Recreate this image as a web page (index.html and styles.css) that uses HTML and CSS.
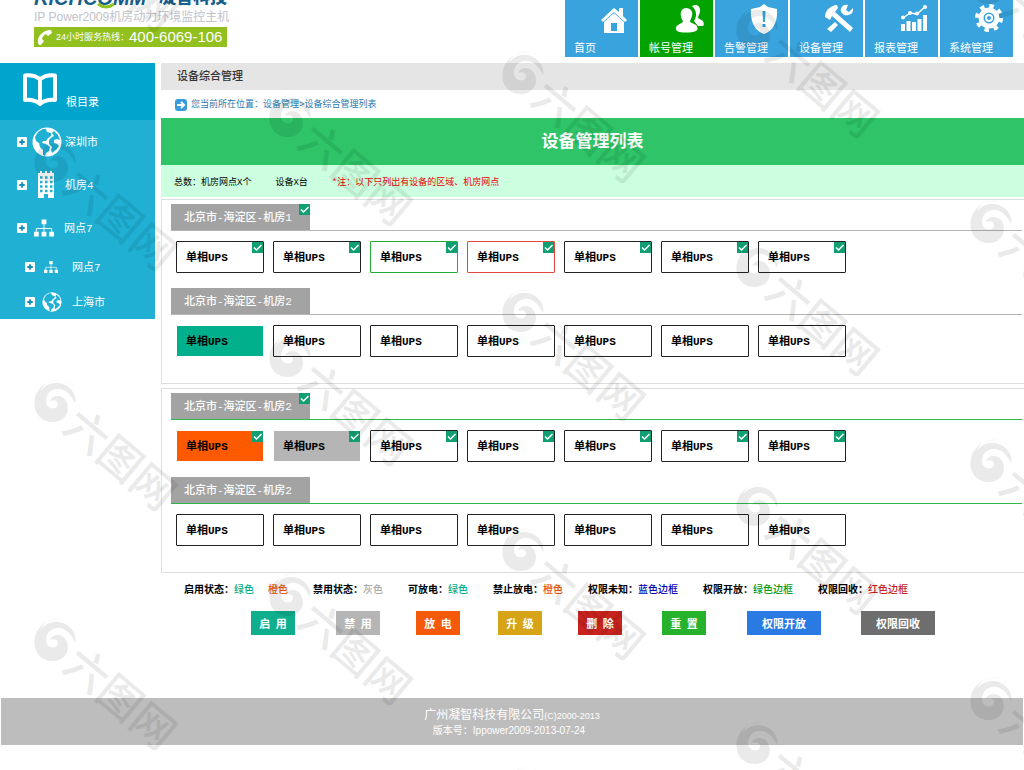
FILE: index.html
```html
<!DOCTYPE html>
<html lang="zh-CN">
<head>
<meta charset="utf-8">
<title>设备综合管理</title>
<link rel="stylesheet" href="styles.css">
</head>
<body>
<svg class="defs" aria-hidden="true">
  <symbol id="globe" viewBox="0 0 30 30">
    <circle cx="15" cy="15" r="14.500" fill="#fff"/>
    <path fill="#20b0d4" d="M3 10l3-5 5-3 3 0 1 3 4 1 0 3-3 2-2 3-3 0-1 2 4 1 4 3-1 4-3 2-1 3-2-1 0-5-3-3-1-4-3-2zM22 4l4 4 2 5-3-1-3 1 0 3 3 1 2 2-3 4-4 3-1-3 1-3-3-3 0-4 3-3 2-1-2-3z"/>
  </symbol>
  <symbol id="tree" viewBox="0 0 21 18">
    <path fill="#fff" d="M8 0h5v5H8zM0 13h5v5H0zM8 13h5v5H8zM16 13h5v5h-5z"/>
    <path fill="none" stroke="#fff" d="M10.500 5v8M2.500 13V9.500h16V13"/>
  </symbol>
  <symbol id="plus" viewBox="0 0 11 11">
    <rect width="11" height="11" rx="1" fill="#fff"/>
    <path d="M5.500 2.500v6M2.500 5.500h6" stroke="#138fb5" stroke-width="2"/>
  </symbol>
</svg>

<header class="header">
  <div class="brand">
    <div class="logo"><i>RICHCOMM</i><b>凝智科技</b>
      <svg class="smile" viewBox="0 0 18 7"><path d="M1 1q8 6 16 0" fill="none" stroke="#8fc31f" stroke-width="3"/></svg>
    </div>
    <div class="product">IP Power2009机房动力环境监控主机</div>
    <div class="hotline">
      <svg viewBox="0 0 16 16"><path fill="#fff" d="M1 14C0 7 6 1 14 1l1 3-4 3-2-2C7 6 5 8 5 10l2 2-3 4-2 0z"/></svg>
      <span>24小时服务热线：</span><strong>400-6069-106</strong>
    </div>
  </div>
  <nav class="nav">
    <a href="#"><svg viewBox="0 0 30 30"><path fill="#fff" d="M2 16L15 4l5 4V4h4v8l4 4-2 2-11-10L4 18zM5 18L15 9l10 9v11H5z"/><path fill="#38a3dc" d="M12 19h6v8h-6z"/></svg>首页</a>
    <a href="#" class="active"><svg viewBox="0 0 30 30"><path fill="#fff" d="M18 2c5-3 9 1 8 6-1 3-2 4-2 6l5 3c1 2 1 4 0 5h-5l-4-5c3-5 3-10-2-15z"/><path fill="#fff" d="M12 4c5 0 7 4 6 8-1 3-2 4-2 6l6 3c2 2 2 5 0 6-5 2-15 2-19 0-2-2-1-5 1-6l5-3c0-2-2-3-2-6-1-4 1-8 5-8z"/></svg>帐号管理</a>
    <a href="#"><svg viewBox="0 0 30 30"><path fill="#fff" d="M15 0l4 3 9 2c1 13-4 22-13 25C6 27 1 18 2 5l9-2z"/><path fill="#38a3dc" d="M13.500 7h3l-.5 11h-2zM13.500 20h3v3h-3z"/></svg>告警管理</a>
    <a href="#"><svg viewBox="0 0 30 30"><path fill="#fff" d="M1 13c0-6 4-11 12-12l1 3-3 4 18 16-3 4L8 12l-2 4zM29 4l-4 4-3-2 2-5c-5-1-8 3-7 7l3 3c5 1 10-1 9-7zM11 18l3 3-7 7-4-3z"/></svg>设备管理</a>
    <a href="#"><svg viewBox="0 0 30 30"><path fill="#fff" d="M2 20h4v7H2zM7.500 17h4v10h-4zM13 18h4v9h-4zM18.500 15h4v12h-4zM24 11h4v16h-4z"/><path fill="none" stroke="#fff" stroke-width="1.500" d="M4 14l7-5 7 1 9-8"/><g fill="#fff"><circle cx="4" cy="13.500" r="2"/><circle cx="11" cy="9" r="2"/><circle cx="18" cy="9.500" r="2"/><circle cx="26" cy="3" r="2"/></g></svg>报表管理</a>
    <a href="#"><svg viewBox="0 0 30 30"><circle cx="15" cy="14" r="12" fill="none" stroke="#fff" stroke-width="4" stroke-dasharray="4.400 5.025"/><circle cx="15" cy="14" r="8" fill="none" stroke="#fff" stroke-width="5"/><circle cx="15" cy="14" r="3" fill="none" stroke="#fff" stroke-width="2"/></svg>系统管理</a>
  </nav>
</header>

<div class="layout">
  <aside class="sidebar">
    <a href="#" class="root"><svg viewBox="0 0 34 34"><path fill="none" stroke="#fff" stroke-width="4" stroke-linejoin="round" d="M17 6Q10 1 2 2.500V27q9-1 15 4 6-5 15-4V2.500Q24 1 17 6zv24"/></svg>根目录</a>
    <a href="#" class="node"><svg class="plus"><use href="#plus"/></svg><svg class="pic"><use href="#globe"/></svg><span>深圳市</span></a>
    <a href="#" class="node"><svg class="plus"><use href="#plus"/></svg><svg class="pic building" viewBox="0 0 18 27"><path fill="#fff" d="M1 2h2V0h2v2h3V0h2v2h3V0h2v2h2v25h-6v-4H7v4H1z"/><path fill="none" stroke="#20b0d4" stroke-width="2.500" stroke-dasharray="2.500 2.500" d="M3 6.500h13M3 11h13M3 15.500h13M3 20h13"/></svg><span>机房4</span></a>
    <a href="#" class="node"><svg class="plus"><use href="#plus"/></svg><svg class="pic tree"><use href="#tree"/></svg><span>网点7</span></a>
    <a href="#" class="node child"><svg class="plus"><use href="#plus"/></svg><svg class="pic tree"><use href="#tree"/></svg><span>网点7</span></a>
    <a href="#" class="node child"><svg class="plus"><use href="#plus"/></svg><svg class="pic"><use href="#globe"/></svg><span>上海市</span></a>
  </aside>

  <main class="main">
    <h1 class="page-title">设备综合管理</h1>
    <div class="crumbs">
      <svg viewBox="0 0 12 12"><rect width="12" height="12" rx="3" fill="#3a9bdc"/><path d="M2 6h7M6 3l3 3-3 3" fill="none" stroke="#fff" stroke-width="2"/></svg>
      <span>您当前所在位置：<a href="#">设备管理</a>&gt;<a href="#">设备综合管理列表</a></span>
    </div>
    <h2 class="banner">设备管理列表</h2>
    <div class="totals"><span>总数：机房网点X个</span><span>设备X台</span><span class="note">*注：以下只列出有设备的区域、机房网点</span></div>

    <section class="panel">
      <div class="group-head"><label class="tag">北京市-海淀区-机房1<input type="checkbox" checked></label></div>
      <div class="devices">
        <label class="device">单相UPS<input type="checkbox" checked></label>
        <label class="device">单相UPS<input type="checkbox" checked></label>
        <label class="device granted">单相UPS<input type="checkbox" checked></label>
        <label class="device revoked">单相UPS<input type="checkbox" checked></label>
        <label class="device">单相UPS<input type="checkbox" checked></label>
        <label class="device">单相UPS<input type="checkbox" checked></label>
        <label class="device">单相UPS<input type="checkbox" checked></label>
      </div>
      <div class="group-head"><label class="tag">北京市-海淀区-机房2<input type="checkbox"></label></div>
      <div class="devices">
        <label class="device enabled">单相UPS<input type="checkbox"></label>
        <label class="device">单相UPS<input type="checkbox"></label>
        <label class="device">单相UPS<input type="checkbox"></label>
        <label class="device">单相UPS<input type="checkbox"></label>
        <label class="device">单相UPS<input type="checkbox"></label>
        <label class="device">单相UPS<input type="checkbox"></label>
        <label class="device">单相UPS<input type="checkbox"></label>
      </div>
    </section>

    <section class="panel green">
      <div class="group-head"><label class="tag">北京市-海淀区-机房2<input type="checkbox" checked></label></div>
      <div class="devices">
        <label class="device no-discharge">单相UPS<input type="checkbox" checked></label>
        <label class="device disabled">单相UPS<input type="checkbox" checked></label>
        <label class="device">单相UPS<input type="checkbox" checked></label>
        <label class="device">单相UPS<input type="checkbox" checked></label>
        <label class="device">单相UPS<input type="checkbox" checked></label>
        <label class="device">单相UPS<input type="checkbox" checked></label>
        <label class="device">单相UPS<input type="checkbox" checked></label>
      </div>
      <div class="group-head"><label class="tag">北京市-海淀区-机房2<input type="checkbox"></label></div>
      <div class="devices">
        <label class="device">单相UPS<input type="checkbox"></label>
        <label class="device">单相UPS<input type="checkbox"></label>
        <label class="device">单相UPS<input type="checkbox"></label>
        <label class="device">单相UPS<input type="checkbox"></label>
        <label class="device">单相UPS<input type="checkbox"></label>
        <label class="device">单相UPS<input type="checkbox"></label>
        <label class="device">单相UPS<input type="checkbox"></label>
      </div>
    </section>

    <div class="legend">
      <span>启用状态：<em class="teal">绿色</em><em class="orange second">橙色</em></span>
      <span>禁用状态：<em class="gray">灰色</em></span>
      <span>可放电：<em class="teal">绿色</em></span>
      <span>禁止放电：<em class="orange">橙色</em></span>
      <span>权限未知：<em class="blue">蓝色边框</em></span>
      <span>权限开放：<em class="grass">绿色边框</em></span>
      <span>权限回收：<em class="red">红色边框</em></span>
    </div>
    <div class="actions">
      <button type="button" class="b-enable">启&ensp;用</button>
      <button type="button" class="b-disable">禁&ensp;用</button>
      <button type="button" class="b-discharge">放&ensp;电</button>
      <button type="button" class="b-upgrade">升&ensp;级</button>
      <button type="button" class="b-delete">删&ensp;除</button>
      <button type="button" class="b-reset">重&ensp;置</button>
      <button type="button" class="b-grant wide">权限开放</button>
      <button type="button" class="b-revoke wide">权限回收</button>
    </div>
  </main>
</div>

<footer class="footer">
  <p class="company">广州凝智科技有限公司<small>(C)2000-2013</small></p>
  <p class="version">版本号：Ippower2009-2013-07-24</p>
</footer>

<svg class="watermark" aria-hidden="true">
  <defs>
    <g id="mark">
      <path d="M17-17C4-29-18-22-22-5c-3 15 7 25 19 24 12-1 17-12 12-21-4-7-14-6-16 0 4-2 9 0 8 4-2 6-12 4-12-4 0-13 19-20 29 2 2-8-4-15-10-18-8-4-19-2-24 6 3-11 20-16 33-5z"/>
      <text transform="rotate(40)" x="20" y="18">六图网</text>
    </g>
  </defs>
  <use href="#mark" x="57" y="-76"/><use href="#mark" x="57" y="163"/><use href="#mark" x="57" y="403"/><use href="#mark" x="57" y="642"/>
  <use href="#mark" x="292" y="118"/><use href="#mark" x="292" y="358"/><use href="#mark" x="292" y="597"/>
  <use href="#mark" x="525" y="75"/><use href="#mark" x="525" y="313"/><use href="#mark" x="525" y="552"/><use href="#mark" x="525" y="791"/>
  <use href="#mark" x="759" y="30"/><use href="#mark" x="759" y="268"/><use href="#mark" x="759" y="507"/><use href="#mark" x="759" y="745"/>
  <use href="#mark" x="993" y="-15"/><use href="#mark" x="993" y="224"/><use href="#mark" x="993" y="463"/><use href="#mark" x="993" y="701"/>
</svg>
</body>
</html>
```

FILE: styles.css
```css
* { box-sizing: border-box; }
body {
  margin: 0;
  background: #fff;
  color: #000;
  font: 11px/16px "Liberation Mono", "Noto Sans CJK SC", monospace;
}
h1, h2, p { margin: 0; }
a { color: inherit; text-decoration: none; }
svg { display: block; flex: none; }
.defs { position: absolute; width: 0; height: 0; }

/* header */
.header {
  display: flex;
  justify-content: space-between;
  height: 57px;
  margin-bottom: 6px;
  padding: 0 11px 0 34px;
  overflow: hidden;
}
.brand {
  display: flex;
  flex-direction: column;
  justify-content: flex-end;
  width: 193px;
  padding-bottom: 10px;
  font-family: "Liberation Sans", "Noto Sans CJK SC", sans-serif;
  white-space: nowrap;
}
.brand > div { flex: none; }
.logo {
  position: relative;
  display: flex;
  justify-content: space-between;
  color: #17608c;
  font-size: 20px;
  line-height: 20px;
  font-weight: bold;
}
.logo b { font-size: 17px; }
.smile { position: absolute; left: 63px; bottom: -2px; width: 18px; height: 7px; }
.product { color: #c2c2ca; font-size: 12px; line-height: 19px; }
.hotline {
  display: flex;
  align-items: center;
  height: 20px;
  padding-left: 3px;
  background: #92c01f;
  color: #fff;
  font-size: 9px;
}
.hotline svg { width: 16px; height: 16px; margin-right: 3px; }
.hotline strong { font-size: 15px; font-weight: normal; }
.nav { display: flex; gap: 2px; }
.nav a {
  display: flex;
  flex-direction: column;
  justify-content: space-between;
  width: 73px;
  padding: 4px 9px 0;
  background: #38a3dc;
  color: #fff;
}
.nav a.active { background: #00a300; }
.nav svg { width: 30px; height: 30px; align-self: flex-end; }

/* layout */
.layout { display: flex; align-items: flex-start; gap: 6px; }
.sidebar { flex: none; width: 155px; background: #20b0d4; color: #fff; }
.root {
  display: flex;
  align-items: flex-end;
  gap: 9px;
  height: 57px;
  padding: 0 0 9px 23px;
  background: #00a5cd;
}
.root svg { width: 34px; height: 34px; margin-bottom: 4px; }
.node { display: flex; align-items: center; height: 43px; padding-left: 17px; }
.node span { padding-top: 3px; }
.plus { width: 10px; height: 10px; }
.pic { width: 30px; height: 30px; margin: 0 3px 0 5px; }
.pic.building { width: 18px; height: 27px; margin: 0 10px 0 10px; }
.pic.tree { width: 20px; height: 18px; margin: 0 10px 0 7px; }
.child { height: 35px; padding-left: 25px; }
.child .pic { width: 20px; height: 20px; margin: 0 10px 0 7px; }
.child .pic.tree { width: 14px; height: 12px; margin: 0 14px 0 9px; }

.main { flex: 1; min-width: 0; }
.page-title {
  height: 27px;
  padding-left: 16px;
  background: #e5e5e5;
  color: #333;
  font-size: 11px;
  line-height: 29px;
  font-weight: 500;
}
.crumbs {
  display: flex;
  align-items: center;
  gap: 4px;
  height: 28px;
  padding: 2px 0 0 14px;
  color: #1f7ab0;
  font-size: 9px;
}
.crumbs svg { width: 12px; height: 12px; }
.banner {
  height: 47px;
  background: #2ec467;
  color: #fff;
  font-size: 17px;
  line-height: 50px;
  text-align: center;
}
.totals {
  display: flex;
  gap: 24px;
  margin-bottom: 2px;
  padding: 4px 13px 0;
  background: #ccffe0;
  font-size: 9px;
  line-height: 28px;
}
.note { color: #e00; }

/* panels */
.panel {
  margin-bottom: 4px;
  padding: 4px 2px 26px 9px;
  border: 1px solid #dedede;
  border-right: 0;
}
.group-head { display: flex; height: 27px; border-bottom: 1px solid #b5b5b5; }
.green .group-head { border-bottom-color: #2eb84a; }
.tag {
  position: relative;
  width: 139px;
  height: 26px;
  padding-left: 13px;
  background: #a3a3a3;
  color: #fff;
  line-height: 28px;
  font-weight: 500;
}
.devices { display: flex; flex-wrap: wrap; gap: 9px; padding: 10px 0 0 5px; }
.devices + .group-head { margin-top: 15px; }
.device {
  position: relative;
  width: 88px;
  height: 32px;
  padding-left: 9px;
  border: 1px solid #222;
  border-radius: 1px;
  background: #fff;
  line-height: 33px;
  font-weight: bold;
}
.granted { border-color: #22ac38; }
.revoked { border-color: #e0483e; }
.enabled { background: #00b08c; border-color: #fff; }
.no-discharge { background: #ff5a00; border-color: #fff; }
.disabled { background: #b5b5b5; border-color: #fff; }
input[type="checkbox"] {
  position: absolute;
  top: 0;
  right: 0;
  width: 11px;
  height: 11px;
  margin: 0;
  appearance: none;
}
input[type="checkbox"]:checked {
  background: #0f9f72 url("data:image/svg+xml,%3Csvg xmlns='http://www.w3.org/2000/svg' viewBox='0 0 11 11'%3E%3Cpath d='M2 5.500l2.500 2.500L9.500 3' fill='none' stroke='white' stroke-width='1.500'/%3E%3C/svg%3E");
}

/* legend and actions */
.legend {
  display: flex;
  gap: 25px;
  padding: 6px 0 0 23px;
  font-size: 10px;
  line-height: 16px;
  font-weight: bold;
  white-space: nowrap;
}
.legend em { font-style: normal; font-weight: 500; }
.second { margin-left: 14px; }
.teal { color: #00b08c; }
.orange { color: #ea5504; }
.gray { color: #aaa; }
.blue { color: #0000b4; }
.grass { color: #0a9b14; }
.red { color: #c81e1e; }
.actions {
  display: grid;
  grid-template-columns: 85px 80px 82px 80px 84px 85px 114px 74px;
  padding: 12px 0 0 90px;
}
.actions button {
  width: 44px;
  height: 24px;
  padding: 0;
  border: 0;
  color: #fff;
  font: bold 11px/24px "Noto Sans CJK SC", sans-serif;
}
.actions .wide { width: 74px; }
.b-enable { background: #0fae8c; }
.b-disable { background: #b5b5b5; }
.b-discharge { background: #f55a0a; }
.b-upgrade { background: #d7a418; }
.b-delete { background: #c8231e; }
.b-reset { background: #27b22d; }
.b-grant { background: #2a7ae4; }
.b-revoke { background: #6e6e6e; }

.footer {
  margin: 63px 1px 0;
  padding: 10px 0 7px;
  background: #bdbdbd;
  color: #fff;
  font-family: "Liberation Sans", "Noto Sans CJK SC", sans-serif;
  text-align: center;
}
.company { font-size: 12px; line-height: 15px; }
.company small { font-size: 9px; }
.version { font-size: 10px; line-height: 14px; padding-right: 6px; }

.watermark {
  position: absolute;
  top: 0;
  left: 0;
  width: 100%;
  height: 100%;
  overflow: hidden;
  pointer-events: none;
  fill: #000;
  opacity: .08;
  font: 500 43px "Noto Sans CJK SC", sans-serif;
}
```
